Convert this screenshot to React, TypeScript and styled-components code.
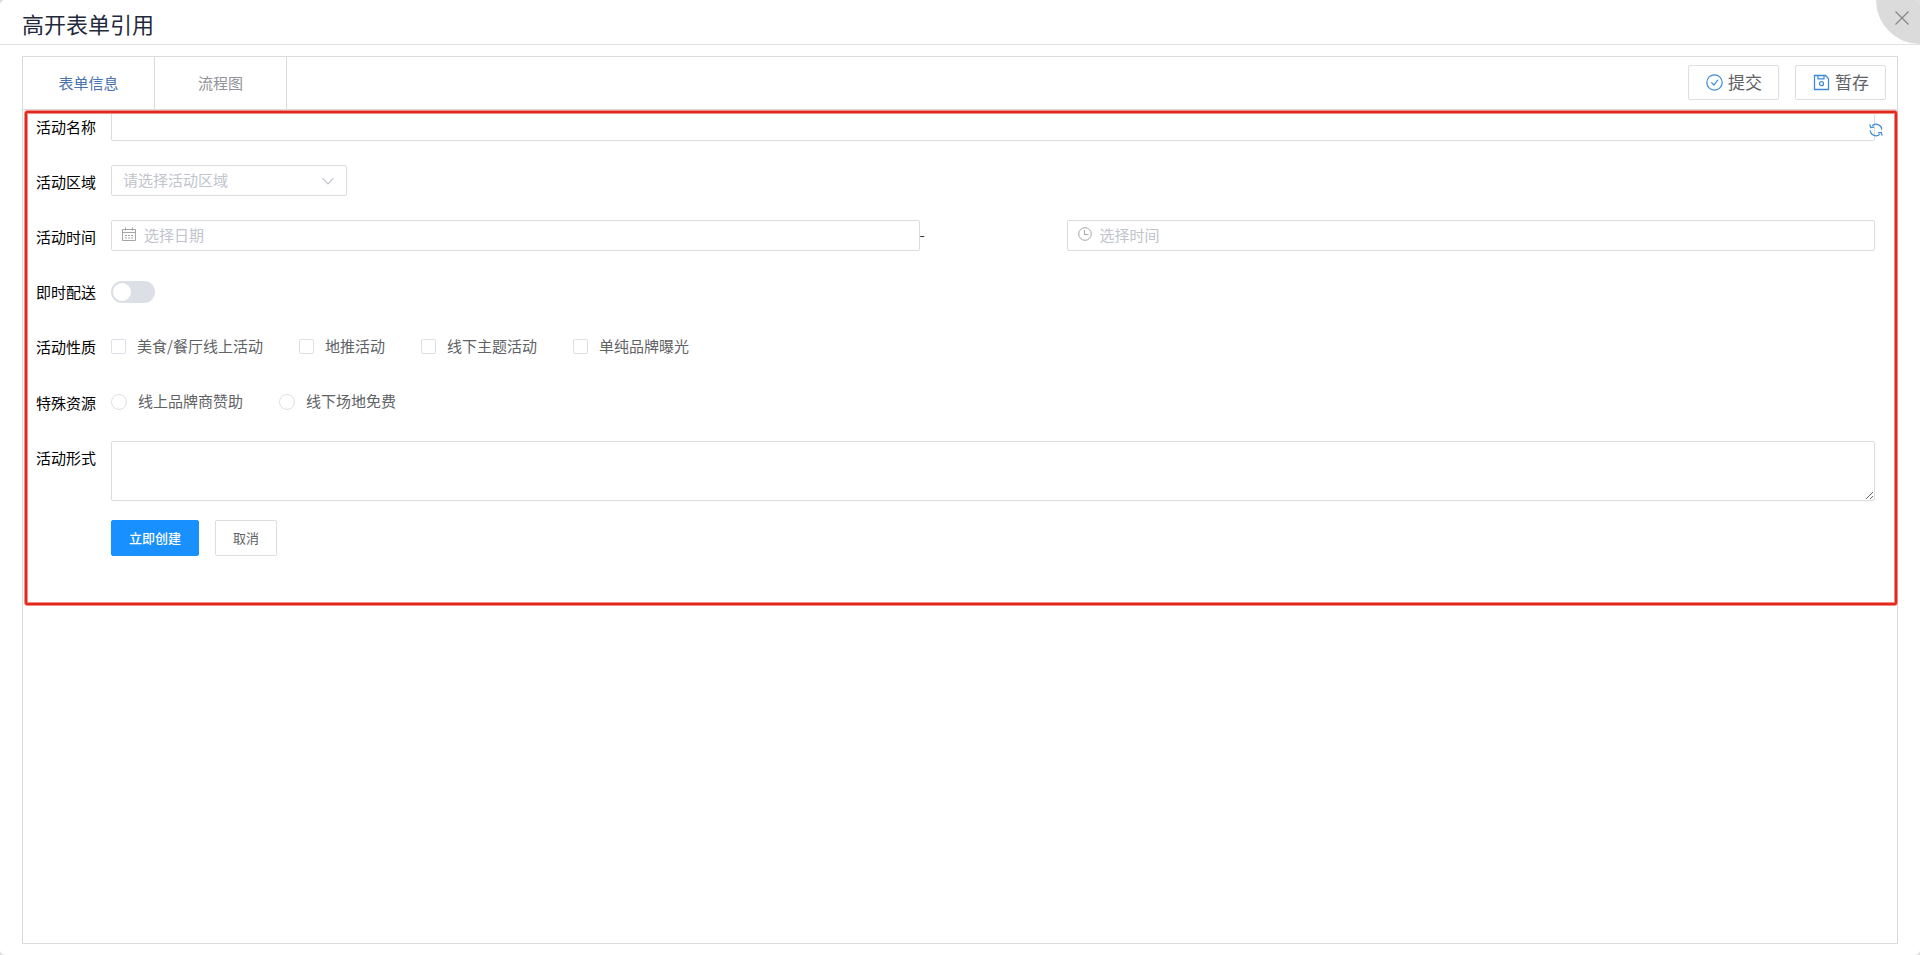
import React from "react";
import styled, { createGlobalStyle, css } from "styled-components";

const Global = createGlobalStyle`
  * { box-sizing: border-box; }
  html { background: #dcdcdc; }
  body { margin: 0; }
  body, input, textarea, select, button {
    font-family: "Noto Sans CJK SC", "Liberation Sans", sans-serif;
    font-size: 15px;
    font-weight: 400;
  }
`;

const Dialog = styled.div`
  display: flex;
  flex-direction: column;
  min-height: 100vh;
  background: #fff;
  border-radius: 5px;
  overflow: hidden;
`;

const Header = styled.header`
  display: flex;
  justify-content: space-between;
  height: 45px;
  padding-left: 22px;
  border-bottom: 1px solid #dfe1e3;
`;

const Title = styled.h1`
  margin: 0;
  font-size: 22px;
  font-weight: 400;
  line-height: 46px;
  color: #1f2a3d;
`;

const CloseButton = styled.button`
  display: flex;
  width: 44px;
  height: 44px;
  padding: 10px 0 0 18px;
  border: 0;
  border-bottom-left-radius: 44px;
  background: #dbdbdb;
  color: #85858a;
`;

const Panel = styled.main`
  flex: 1;
  margin: 11px 22px;
  border: 1px solid #d8dcdf;
`;

const TabBar = styled.div`
  display: flex;
  justify-content: space-between;
  align-items: flex-start;
  height: 53px;
  padding-right: 11px;
  border-bottom: 1px solid #d8dcdf;
`;

const Tabs = styled.nav`
  display: flex;
  align-self: stretch;
`;

const Tab = styled.button<{ $active?: boolean }>`
  width: 132px;
  padding: 0 0 2px;
  border: 0;
  border-right: 1px solid #d8dcdf;
  background: none;
  color: ${(p) => (p.$active ? "#4a72ae" : "#909399")};
`;

const Actions = styled.div`
  display: flex;
  gap: 16px;
  padding-top: 8px;
`;

const ActionButton = styled.button`
  display: flex;
  align-items: center;
  justify-content: center;
  gap: 5px;
  height: 35px;
  padding: 0 16px 0 17px;
  border: 1px solid #dcdfe2;
  border-radius: 2px;
  background: #fff;
  color: #606266;
  font-size: 17px;
  svg { color: #3d8bd8; }
`;

const Text = styled.span`
  padding-bottom: 2px;
`;

const Form = styled.form`
  position: relative;
  display: flex;
  flex-direction: column;
  gap: 24px;
  padding: 0 22px 50px 13px;
`;

const Highlight = styled.div`
  position: absolute;
  inset: 0 -1px 0 1px;
  border: 4px solid #f58a82;
  border-radius: 4px;
  pointer-events: none;
  &::after {
    content: "";
    position: absolute;
    inset: -3px;
    border: 2px solid #e0281e;
    border-radius: 2px;
  }
`;

const Row = styled.div<{ $tall?: boolean }>`
  display: grid;
  grid-template-columns: 75px 1fr;
  min-height: ${(p) => (p.$tall ? 32 : 31)}px;
`;

const labelText = css`
  height: 31px;
  line-height: 34px;
  color: #000;
`;

const Label = styled.label`
  ${labelText}
`;

const GroupLabel = styled.span`
  ${labelText}
`;

const field = css`
  width: 100%;
  border: 1px solid #d9dce1;
  border-radius: 2px;
  background: #fff;
  color: #606266;
  outline: 0;
`;

const Input = styled.input<{ $icon?: boolean }>`
  ${field}
  height: 31px;
  padding: 0 11px 2px ${(p) => (p.$icon ? 32 : 11)}px;
  &::placeholder { color: #c0c4cc; opacity: 1; }
`;

const TextArea = styled.textarea`
  ${field}
  display: block;
  height: 60px;
  padding: 5px 11px;
  resize: vertical;
`;

const SelectBox = styled.div`
  position: relative;
  width: 236px;
  svg {
    position: absolute;
    right: 12px;
    top: 9px;
    color: #c0c4cc;
    pointer-events: none;
  }
`;

const Select = styled.select`
  ${field}
  height: 31px;
  padding: 0 33px 2px 11px;
  appearance: none;
  color: #c0c4cc;
`;

const NameField = styled.div`
  position: relative;
`;

const RefreshButton = styled.button`
  position: absolute;
  right: -8px;
  top: 13px;
  display: flex;
  padding: 0;
  border: 0;
  background: none;
  color: #3d8bd8;
`;

const DateTime = styled.div`
  display: grid;
  grid-template-columns: 11fr 2fr 11fr;
  line-height: 30px;
  color: #333;
`;

const IconField = styled.div`
  position: relative;
  display: flex;
  svg {
    position: absolute;
    left: 11px;
    top: 7px;
    color: #a3a5a9;
  }
`;

const Switch = styled.input`
  appearance: none;
  width: 44px;
  height: 22px;
  margin: 6px 0 0;
  border-radius: 11px;
  background: #dcdfe6;
  &::before {
    content: "";
    display: block;
    width: 18px;
    height: 18px;
    margin: 2px;
    border-radius: 50%;
    background: #fff;
  }
  &:checked { background: #1890ff; }
  &:checked::before { margin-left: 24px; }
`;

const Options = styled.div`
  display: flex;
  align-items: center;
  gap: 36px;
`;

const Option = styled.label`
  display: flex;
  align-items: center;
  gap: 11px;
  color: #606266;
`;

const Choice = styled.input`
  appearance: none;
  width: ${(p) => (p.type === "radio" ? 16 : 15)}px;
  height: ${(p) => (p.type === "radio" ? 16 : 15)}px;
  margin: 0;
  border: 1px solid #dcdfe6;
  border-radius: ${(p) => (p.type === "radio" ? "50%" : "2px")};
  background: #fff;
  &:checked { background: #1890ff; }
`;

const Buttons = styled.div`
  display: flex;
  gap: 16px;
  margin: -5px 0 0 75px;
`;

const FormButton = styled.button<{ $primary?: boolean }>`
  height: 36px;
  padding: 0 17px 2px;
  border: 1px solid ${(p) => (p.$primary ? "#1890ff" : "#dcdfe2")};
  border-radius: 2px;
  background: ${(p) => (p.$primary ? "#1890ff" : "#fff")};
  color: ${(p) => (p.$primary ? "#fff" : "#606266")};
  font-size: 13px;
  font-weight: ${(p) => (p.$primary ? 500 : 400)};
`;

type IconProps = { size: number; box?: number; children: React.ReactNode };
const Icon = ({ size, box = 16, children }: IconProps) => (
  <svg width={size} height={size} viewBox={`0 0 ${box} ${box}`} fill="none" stroke="currentColor" aria-hidden="true">
    {children}
  </svg>
);

const natures = ["美食/餐厅线上活动", "地推活动", "线下主题活动", "单纯品牌曝光"];
const resources = ["线上品牌商赞助", "线下场地免费"];

export default function App() {
  return (
    <>
      <Global />
      <Dialog>
        <Header>
          <Title>高开表单引用</Title>
          <CloseButton aria-label="关闭">
            <Icon size={16}>
              <path d="M1.5 1.5l13 13M14.5 1.5l-13 13" strokeWidth="1.2" />
            </Icon>
          </CloseButton>
        </Header>
        <Panel>
          <TabBar>
            <Tabs>
              <Tab $active>表单信息</Tab>
              <Tab>流程图</Tab>
            </Tabs>
            <Actions>
              <ActionButton>
                <Icon size={17} box={17}>
                  <circle cx="8.5" cy="8.5" r="7.7" strokeWidth="1.2" />
                  <path d="M5.3 8.3l2.6 2.7 4-5.2" strokeWidth="1.2" />
                </Icon>
                <Text>提交</Text>
              </ActionButton>
              <ActionButton>
                <Icon size={17} box={17}>
                  <path d="M1.500 1.500h11l3 3v11h-14z" strokeWidth="1.3" />
                  <path d="M5 1.500v3.300h6V1.500" strokeWidth="1.2" />
                  <circle cx="8.500" cy="9.700" r="2" strokeWidth="1.2" />
                </Icon>
                <Text>暂存</Text>
              </ActionButton>
            </Actions>
          </TabBar>
          <Form onSubmit={(e) => e.preventDefault()}>
            <Row>
              <Label htmlFor="name">活动名称</Label>
              <NameField>
                <Input id="name" />
                <RefreshButton type="button" aria-label="刷新">
                  <Icon size={14} box={14}>
                    <path d="M3 2.9A5.8 5.8 0 0 1 12.8 6.6M11 11.1A5.8 5.8 0 0 1 1.2 7.4" strokeWidth="1.2" />
                    <path d="M.8 1.4l1 3.2 3.3-.4M13.2 12.6l-1-3.2-3.3.4" strokeWidth="1.2" />
                  </Icon>
                </RefreshButton>
              </NameField>
            </Row>
            <Row>
              <Label htmlFor="region">活动区域</Label>
              <SelectBox>
                <Select id="region" defaultValue="">
                  <option value="" disabled>请选择活动区域</option>
                </Select>
                <Icon size={14} box={14}>
                  <path d="M1.5 4.2L7 9.8l5.500-5.600" strokeWidth="1.2" />
                </Icon>
              </SelectBox>
            </Row>
            <Row>
              <Label htmlFor="date">活动时间</Label>
              <DateTime>
                <IconField>
                  <Input id="date" placeholder="选择日期" $icon />
                  <Icon size={14} box={14}>
                    <path d="M.5 2.500h13v11H.5zM.5 5.500h13M3.500.5v3M10.500.5v3" />
                    <path d="M3 8.500h2M6 8.500h2M9 8.500h2M3 11h2M6 11h2M9 11h2" />
                  </Icon>
                </IconField>
                <span>-</span>
                <IconField>
                  <Input aria-label="选择时间" placeholder="选择时间" $icon />
                  <Icon size={14} box={14}>
                    <circle cx="7" cy="7" r="6.300" />
                    <path d="M6.500 3v4.500H10.500" />
                  </Icon>
                </IconField>
              </DateTime>
            </Row>
            <Row>
              <Label htmlFor="delivery">即时配送</Label>
              <Switch id="delivery" type="checkbox" role="switch" />
            </Row>
            <Row $tall role="group" aria-labelledby="nature">
              <GroupLabel id="nature">活动性质</GroupLabel>
              <Options>
                {natures.map((n) => (
                  <Option key={n}>
                    <Choice type="checkbox" />
                    <Text>{n}</Text>
                  </Option>
                ))}
              </Options>
            </Row>
            <Row role="radiogroup" aria-labelledby="resource">
              <GroupLabel id="resource">特殊资源</GroupLabel>
              <Options>
                {resources.map((r) => (
                  <Option key={r}>
                    <Choice type="radio" name="resource" />
                    <Text>{r}</Text>
                  </Option>
                ))}
              </Options>
            </Row>
            <Row>
              <Label htmlFor="form">活动形式</Label>
              <TextArea id="form" />
            </Row>
            <Buttons>
              <FormButton $primary type="submit">立即创建</FormButton>
              <FormButton type="button">取消</FormButton>
            </Buttons>
            <Highlight />
          </Form>
        </Panel>
      </Dialog>
    </>
  );
}
